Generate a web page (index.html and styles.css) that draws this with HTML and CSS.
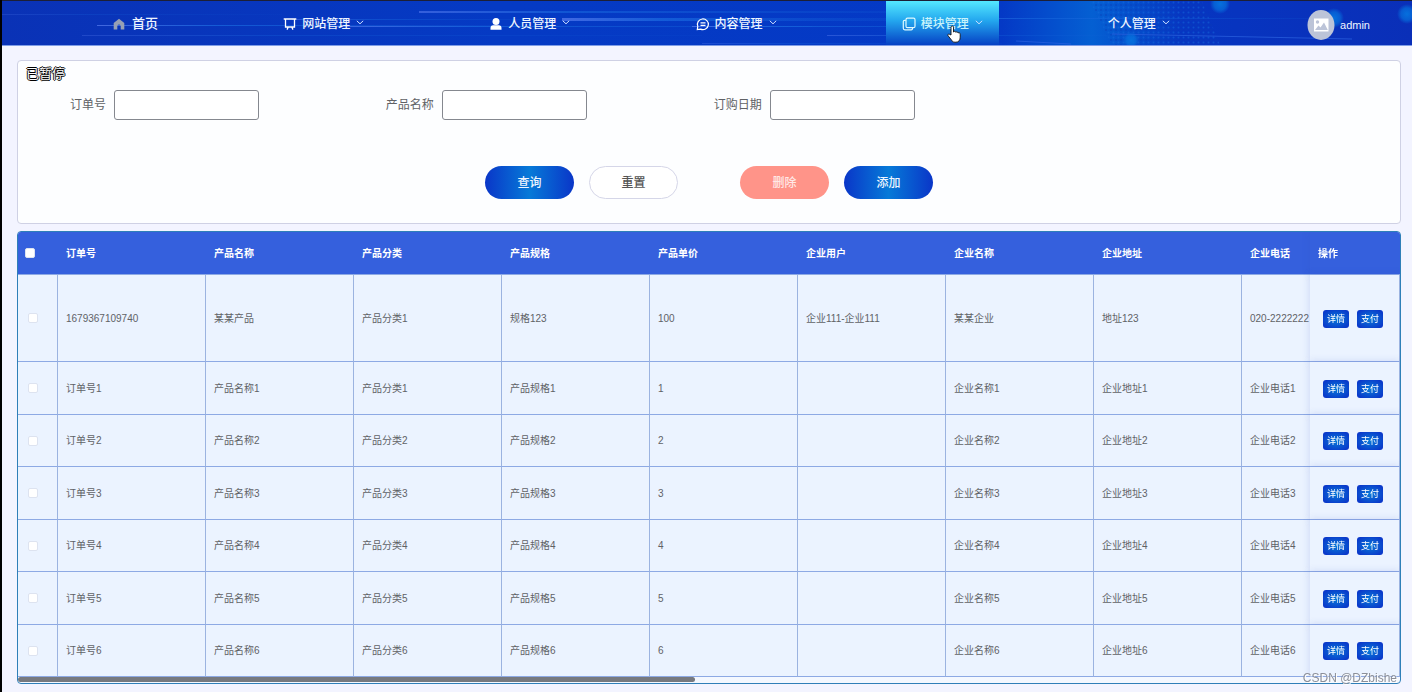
FILE: index.html
```html
<!DOCTYPE html>
<html lang="zh-CN">
<head>
<meta charset="utf-8">
<title>订单管理</title>
<link rel="stylesheet" href="styles.css">
</head>
<body>
<header class="topbar">
  <svg class="topbar-art" viewBox="0 0 1410 44" preserveAspectRatio="none" aria-hidden="true">
    <defs>
      <pattern id="dots" width="5" height="5" patternUnits="userSpaceOnUse"><circle cx="1.5" cy="1.5" r="1" fill="#1670dc"/><circle cx="4" cy="4" r="1" fill="#0a3ab4"/></pattern>
      <linearGradient id="streak"><stop offset="0" stop-color="#5a7df0" stop-opacity=".7"/><stop offset=".3" stop-color="#1a6be0" stop-opacity=".7"/><stop offset="1" stop-color="#1260d8" stop-opacity=".2"/></linearGradient>
      <linearGradient id="glow"><stop offset="0" stop-color="#0464d4" stop-opacity="0"/><stop offset=".5" stop-color="#0464d4" stop-opacity=".9"/><stop offset="1" stop-color="#0464d4" stop-opacity="0"/></linearGradient>
      <radialGradient id="spot"><stop offset="0" stop-color="#0670dd"/><stop offset=".6" stop-color="#0670dd" stop-opacity=".7"/><stop offset="1" stop-color="#0670dd" stop-opacity="0"/></radialGradient>
    </defs>
    <rect x="1000" width="180" height="44" fill="url(#glow)"/>
    <path d="M1088 0h112l18 44h-108z" fill="url(#dots)" opacity=".45"/>
    <g fill="url(#streak)">
      <rect x="95" y="24" width="400" height="1"/>
      <rect x="290" y="18" width="260" height="1" opacity=".6"/>
      <rect x="330" y="25" width="480" height="1"/>
      <rect x="417" y="10" width="490" height="2" opacity=".8"/>
      <rect x="560" y="17" width="330" height="3"/>
      <rect x="690" y="25" width="300" height="1"/>
      <rect x="80" y="34" width="620" height="1" opacity=".4"/>
      <rect x="0" y="13" width="280" height="1" opacity=".3"/>
      <rect x="825" y="34" width="300" height="1" opacity=".6"/>
      <rect x="900" y="17" width="410" height="1" opacity=".8"/>
      <rect x="700" y="42" width="300" height="1" opacity=".4"/>
    </g>
    <path d="M1014 40l55 3M1110 33l240 5" stroke="#2c62df" stroke-opacity=".7" fill="none"/>
    <circle cx="1218" cy="3" r="10" fill="url(#spot)"/>
    <circle cx="1332" cy="17" r="10" fill="url(#spot)"/>
    <circle cx="1405" cy="13" r="10" fill="url(#spot)"/>
    <circle cx="1129" cy="39" r="8" fill="url(#spot)"/>
  </svg>
  <nav class="nav">
    <a class="nav-item home" href="#">
      <svg class="icon" viewBox="0 0 12 12"><path d="M6 .8 11.3 5v6.4H7.7V8.2a1.7 1.7 0 0 0-3.4 0v3.2H.7V5z" fill="#97a0b4"/></svg>首页</a>
    <a class="nav-item" href="#">
      <svg class="icon wide" viewBox="0 0 14 14" fill="none" stroke="#fff" stroke-width="1.3"><path d="M.7 2h12.6M2.5 2v8h9V2M5.3 10l-1.300 2.600M8.700 10l1.300 2.600"/></svg>网站管理
      <svg class="chevron" viewBox="0 0 8 5"><path d="m.8.8 3.200 3 3.200-3"/></svg></a>
    <a class="nav-item" href="#">
      <svg class="icon wide" viewBox="0 0 14 14" fill="#fff"><circle cx="7" cy="4.600" r="3.500"/><path d="M1.500 12.800V11q0-2.700 2.700-2.700h5.600q2.700 0 2.700 2.700v1.800z"/></svg>人员管理
      <svg class="chevron" viewBox="0 0 8 5"><path d="m.8.8 3.200 3 3.200-3"/></svg></a>
    <a class="nav-item" href="#">
      <svg class="icon wide" viewBox="0 0 14 14" fill="none" stroke="#fff" stroke-width="1.200"><path d="M1.300 12.600 1.800 9.300A5.500 5.300 0 1 1 4.600 12.100zM4.500 5.800h5M4.500 8.300h5"/></svg>内容管理
      <svg class="chevron" viewBox="0 0 8 5"><path d="m.8.8 3.200 3 3.200-3"/></svg></a>
    <a class="nav-item active" href="#" aria-current="page">
      <svg class="icon wide" viewBox="0 0 14 14" fill="none" stroke="#dffaff" stroke-width="1.200"><rect x="4" y="1.200" width="9" height="9.500" rx="1.500"/><path d="M3.800 3.300H2.600q-1.300 0-1.300 1.300v6.700q0 1.500 1.500 1.500h6.400q1.300 0 1.300-1.300v-.8"/></svg>模块管理
      <svg class="chevron" viewBox="0 0 8 5"><path d="m.8.8 3.200 3 3.200-3"/></svg>
      <svg class="pointer" viewBox="0 0 14 18"><path d="M4 10V2.200C4 .4 6.500.4 6.500 2.200V7c.5-1 2.200-.8 2.300.3.700-.8 2.100-.5 2.200.7.800-.6 2.200-.3 2.200 1.200v3c0 3-1.500 5-4.200 5H8c-2 0-2.700-.8-3.600-2.300L1 10.700C.3 9.300 1.800 8.600 2.700 9.400z" fill="#fff" stroke="#111" stroke-width=".9"/></svg></a>
    <a class="nav-item" href="#">个人管理
      <svg class="chevron" viewBox="0 0 8 5"><path d="m.8.8 3.200 3 3.200-3"/></svg></a>
    <a class="nav-item user" href="#">
      <svg class="avatar" viewBox="0 0 28 30"><ellipse cx="14" cy="15" rx="13.500" ry="15" fill="#bcc4d8"/><path d="M7 8.500h14.500v13H7z" fill="#fff"/><circle cx="10.500" cy="12" r="1.700" fill="#bcc4d8"/><path d="m8 20 3.500-4.500 2 2 3.500-5 3.800 7.500z" fill="#bcc4d8"/></svg>admin</a>
  </nav>
</header>

<main class="content">
  <form class="search">
    <span class="paused">已暂停</span>
    <div class="fields">
      <div class="field"><label for="order">订单号</label><input id="order" type="text"></div>
      <div class="field"><label for="product">产品名称</label><input id="product" type="text"></div>
      <div class="field"><label for="date">订购日期</label><input id="date" type="text"></div>
    </div>
    <div class="actions">
      <div class="pair"><button type="button" class="btn primary">查询</button><button type="reset" class="btn">重置</button></div>
      <div class="pair"><button type="button" class="btn danger">删除</button><button type="button" class="btn primary">添加</button></div>
    </div>
  </form>

  <section class="orders">
    <div class="table-view">
    <table>
      <colgroup><col class="c-check"><col><col><col><col><col><col><col><col><col><col class="c-ops"></colgroup>
      <thead><tr><th><input type="checkbox" aria-label="全选"></th><th>订单号</th><th>产品名称</th><th>产品分类</th><th>产品规格</th><th>产品单价</th><th>企业用户</th><th>企业名称</th><th>企业地址</th><th>企业电话</th><th class="ops">操作</th></tr></thead>
      <tbody>
        <tr><td><input type="checkbox" aria-label="选择"></td><td>1679367109740</td><td>某某产品</td><td>产品分类1</td><td>规格123</td><td>100</td><td>企业111-企业111</td><td>某某企业</td><td>地址123</td><td>020-2222222</td><td class="ops"><div class="row-actions"><button type="button">详情</button><button type="button">支付</button></div></td></tr>
        <tr><td><input type="checkbox" aria-label="选择"></td><td>订单号1</td><td>产品名称1</td><td>产品分类1</td><td>产品规格1</td><td>1</td><td></td><td>企业名称1</td><td>企业地址1</td><td>企业电话1</td><td class="ops"><div class="row-actions"><button type="button">详情</button><button type="button">支付</button></div></td></tr>
        <tr><td><input type="checkbox" aria-label="选择"></td><td>订单号2</td><td>产品名称2</td><td>产品分类2</td><td>产品规格2</td><td>2</td><td></td><td>企业名称2</td><td>企业地址2</td><td>企业电话2</td><td class="ops"><div class="row-actions"><button type="button">详情</button><button type="button">支付</button></div></td></tr>
        <tr><td><input type="checkbox" aria-label="选择"></td><td>订单号3</td><td>产品名称3</td><td>产品分类3</td><td>产品规格3</td><td>3</td><td></td><td>企业名称3</td><td>企业地址3</td><td>企业电话3</td><td class="ops"><div class="row-actions"><button type="button">详情</button><button type="button">支付</button></div></td></tr>
        <tr><td><input type="checkbox" aria-label="选择"></td><td>订单号4</td><td>产品名称4</td><td>产品分类4</td><td>产品规格4</td><td>4</td><td></td><td>企业名称4</td><td>企业地址4</td><td>企业电话4</td><td class="ops"><div class="row-actions"><button type="button">详情</button><button type="button">支付</button></div></td></tr>
        <tr><td><input type="checkbox" aria-label="选择"></td><td>订单号5</td><td>产品名称5</td><td>产品分类5</td><td>产品规格5</td><td>5</td><td></td><td>企业名称5</td><td>企业地址5</td><td>企业电话5</td><td class="ops"><div class="row-actions"><button type="button">详情</button><button type="button">支付</button></div></td></tr>
        <tr><td><input type="checkbox" aria-label="选择"></td><td>订单号6</td><td>产品名称6</td><td>产品分类6</td><td>产品规格6</td><td>6</td><td></td><td>企业名称6</td><td>企业地址6</td><td>企业电话6</td><td class="ops"><div class="row-actions"><button type="button">详情</button><button type="button">支付</button></div></td></tr>
      </tbody>
    </table>
    </div>
    <div class="scroll-track"><div class="scroll-thumb"></div></div>
  </section>
</main>
<span class="watermark">CSDN @DZbishe</span>
</body>
</html>
```

FILE: styles.css
```css
* { box-sizing: border-box; }

body {
  margin: 0;
  position: relative;
  min-height: 100vh;
  border-left: 2px solid #000;
  background: #f3f4ff;
  color: #606266;
  font: 12px/16px "Liberation Sans", "Noto Sans CJK SC", sans-serif;
}

button, input { font: inherit; }

/* top navigation */
.topbar {
  position: relative;
  border-top: 1px solid #1c1f36;
  border-bottom: 1px solid #7f9de6;
  background: linear-gradient(90deg, #0a32b6 0%, #053ac4 35%, #0439c6 75%, #0a2fb8 100%);
}
.topbar-art { position: absolute; inset: 0; width: 100%; height: 100%; }
.nav {
  position: relative;
  display: flex;
  justify-content: space-between;
  height: 44px;
  padding: 0 42px 0 95px;
}
.nav-item {
  position: relative;
  display: flex;
  align-items: center;
  padding: 2px 16px 0;
  color: #eef5ff;
  font-weight: 500;
  text-decoration: none;
}
.nav-item.home { font-size: 13px; }
.nav-item.user { padding: 4px 0 0 28px; font-size: 11px; }
.nav-item.active {
  color: #c9f4fb;
  background: linear-gradient(#54e8ff, #23a6ee 45%, #0540c4);
}
.icon { width: 12px; height: 12px; margin-right: 7px; }
.icon.wide { width: 14px; height: 14px; margin-right: 5px; }
.chevron {
  width: 8px;
  height: 5px;
  margin: 0 0 4px 6px;
  fill: none;
  stroke: #cfe0ff;
}
.avatar { width: 28px; height: 30px; margin-right: 5px; }
.pointer { position: absolute; left: 61px; top: 24px; width: 14px; height: 18px; }

/* search panel */
.content { padding: 14px 11px 8px 15px; }
.search {
  position: relative;
  padding: 29px 8px 24px;
  border: 1px solid #cfd1e4;
  border-radius: 4px;
  background: #fdfeff;
}
.paused {
  position: absolute;
  left: 8px;
  top: 5px;
  color: #fff;
  font-size: 13px;
  text-shadow: -1px 0 #000, 1px 0 #000, 0 -1px #000, 0 1px #000;
}
.fields { display: grid; grid-template-columns: repeat(3, 24%); }
.field { display: flex; align-items: center; gap: 8px; padding-left: 32px; }
.field label { width: 48px; text-align: right; white-space: nowrap; }
.field input {
  width: 145px;
  height: 30px;
  padding: 0 8px;
  border: 1px solid #85888f;
  border-radius: 3px;
  background: #fff;
}
.actions { display: flex; justify-content: center; gap: 62px; margin-top: 46px; }
.pair { display: flex; gap: 15px; }
.btn {
  width: 89px;
  height: 33px;
  padding: 0;
  border: 1px solid #d5d6e8;
  border-radius: 17px;
  background: #fff;
  color: #555;
  font-weight: 500;
}
.btn.primary {
  border: 0;
  background: linear-gradient(90deg, #0a36c8, #067ad8 50%, #0a36c8);
  color: #eef6ff;
}
.btn.danger { border: 0; background: #ff9489; color: #ffe9e7; }

/* order table */
.orders {
  margin-top: 7px;
  overflow: hidden;
  border: 1px solid #2f7fb8;
  border-radius: 4px;
  background: #f4f8ff;
}
.table-view { overflow: hidden; }
table {
  width: calc(100% + 80px);
  table-layout: fixed;
  border-collapse: separate;
  border-spacing: 0;
  font-size: 10px;
}
.c-check { width: 40px; }
.c-ops { width: 90px; }
th, td {
  padding: 1px 8px 0;
  border-bottom: 1px solid #8da9e4;
  text-align: left;
  white-space: nowrap;
}
th:first-child, td:first-child { padding: 0 7px; }
th { height: 43px; background: #3560dd; color: #fff; font-weight: 700; }
td { height: 53px; border-right: 1px solid #9bb3e0; background: #ebf3ff; }
tbody tr:nth-child(odd) td { height: 52px; }
tbody tr:first-child td { height: 87px; }
table input {
  appearance: none;
  display: block;
  width: 10px;
  height: 10px;
  margin: 0;
  border: 1px solid #dde3f0;
  border-radius: 2px;
  background: #fff;
}
td input { margin-left: 3px; }
.ops { position: sticky; right: 0; box-shadow: 0 0 8px #3050c030; }
td.ops { padding: 1px 0 0 13px; }
.row-actions { display: flex; gap: 8px; }
.row-actions button {
  width: 26px;
  height: 18px;
  padding: 0;
  border: 0;
  border-radius: 3px;
  background: radial-gradient(#087ad8, #0a38ca 85%);
  color: #fff;
  font-size: 9px;
  line-height: 18px;
}
.scroll-track { height: 6px; }
.scroll-thumb { width: 49%; height: 5px; border-radius: 3px; background: #77797f; }

.watermark {
  position: absolute;
  right: 15px;
  bottom: 6px;
  color: #8b8f99;
  text-shadow: 1px 1px #fff;
}
```
